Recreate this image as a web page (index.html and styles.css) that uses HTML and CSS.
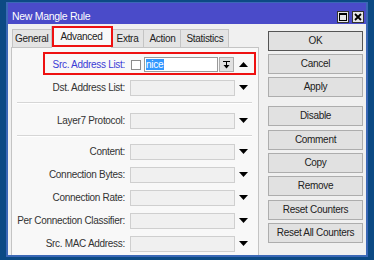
FILE: index.html
```html
<!DOCTYPE html>
<html lang="en">
<head>
    <meta charset="UTF-8">
    <title>New Mangle Rule</title>
    <link rel="stylesheet" href="styles.css">
</head>
<body>
    <!-- Window -->
    <div class="window">
        <div class="titlebar">
            <span class="title">New Mangle Rule</span>
            <span class="tb-btn tb-max">
                <svg width="8" height="8" viewBox="0 0 8 8"><rect x="0.5" y="0.5" width="7" height="7" fill="none" stroke="#000"/><line x1="0" y1="1.5" x2="8" y2="1.5" stroke="#000"/></svg>
            </span>
            <span class="tb-btn">
                <svg width="8" height="8" viewBox="0 0 8 8"><path d="M1 1 L7 7 M7 1 L1 7" stroke="#000" stroke-width="1.8"/></svg>
            </span>
        </div>

        <div class="client">
            <!-- Tabs + form -->
            <div class="left">
                <div class="tabs">
                    <div class="tab first">General</div>
                    <div class="tab active">Advanced</div>
                    <div class="tab">Extra</div>
                    <div class="tab">Action</div>
                    <div class="tab">Statistics</div>
                </div>
                <div class="panel">
                    <div class="row">
                        <label class="label active">Src. Address List:</label>
                        <div class="combo">
                            <span class="check"></span>
                            <span class="input"><span class="sel">nice</span></span>
                            <span class="mini-btn">
                                <svg width="7" height="8" viewBox="0 0 7 8"><line x1="0" y1="0.5" x2="7" y2="0.5" stroke="#000"/><rect x="3" y="1" width="1" height="4" fill="#000"/><path d="M0.5 4 L6.5 4 L3.5 7.5 Z" fill="#000"/></svg>
                            </span>
                        </div>
                        <span class="arrow"><svg width="9" height="5" viewBox="0 0 9 5"><path d="M0 5 L9 5 L4.5 0 Z" fill="#000"/></svg></span>
                    </div>
                    <div class="row">
                        <label class="label">Dst. Address List:</label>
                        <div class="field"></div>
                        <span class="arrow"><svg width="9" height="5" viewBox="0 0 9 5"><path d="M0 0 L9 0 L4.5 5 Z" fill="#000"/></svg></span>
                    </div>
                    <div class="sep"></div>
                    <div class="row">
                        <label class="label">Layer7 Protocol:</label>
                        <div class="field"></div>
                        <span class="arrow"><svg width="9" height="5" viewBox="0 0 9 5"><path d="M0 0 L9 0 L4.5 5 Z" fill="#000"/></svg></span>
                    </div>
                    <div class="sep sep-low"></div>
                    <div class="row">
                        <label class="label">Content:</label>
                        <div class="field"></div>
                        <span class="arrow"><svg width="9" height="5" viewBox="0 0 9 5"><path d="M0 0 L9 0 L4.5 5 Z" fill="#000"/></svg></span>
                    </div>
                    <div class="row">
                        <label class="label">Connection Bytes:</label>
                        <div class="field"></div>
                        <span class="arrow"><svg width="9" height="5" viewBox="0 0 9 5"><path d="M0 0 L9 0 L4.5 5 Z" fill="#000"/></svg></span>
                    </div>
                    <div class="row">
                        <label class="label">Connection Rate:</label>
                        <div class="field"></div>
                        <span class="arrow"><svg width="9" height="5" viewBox="0 0 9 5"><path d="M0 0 L9 0 L4.5 5 Z" fill="#000"/></svg></span>
                    </div>
                    <div class="row">
                        <label class="label">Per Connection Classifier:</label>
                        <div class="field"></div>
                        <span class="arrow"><svg width="9" height="5" viewBox="0 0 9 5"><path d="M0 0 L9 0 L4.5 5 Z" fill="#000"/></svg></span>
                    </div>
                    <div class="row">
                        <label class="label">Src. MAC Address:</label>
                        <div class="field"></div>
                        <span class="arrow"><svg width="9" height="5" viewBox="0 0 9 5"><path d="M0 0 L9 0 L4.5 5 Z" fill="#000"/></svg></span>
                    </div>
                </div>
            </div>

            <!-- Buttons -->
            <div class="buttons">
                <div class="btn default">OK</div>
                <div class="btn">Cancel</div>
                <div class="btn">Apply</div>
                <div class="btn spaced">Disable</div>
                <div class="btn">Comment</div>
                <div class="btn">Copy</div>
                <div class="btn">Remove</div>
                <div class="btn">Reset Counters</div>
                <div class="btn">Reset All Counters</div>
            </div>
        </div>

        <!-- Red highlight marks -->
        <div class="mark mark-tab"></div>
        <div class="mark mark-row"></div>
    </div>
</body>
</html>
```

FILE: styles.css
```css
/* Fond bureau */
body {
    margin: 0;
    padding: 0;
    background: #0c4a84;
    width: 374px;
    height: 260px;
    overflow: hidden;
    font-family: "Liberation Sans", Arial, sans-serif;
    font-size: 10px;
    letter-spacing: -0.3px;
    color: #222;
}

/* Fenetre */
.window {
    position: relative;
    margin: 2px 0 0 6px;
    width: 358px;
    border: 2px solid #3b68b6;
    border-top-width: 1px;
    background: #f0f0f0;
}

.titlebar {
    height: 21px;
    background: #4a4bc9;
    display: flex;
    align-items: center;
    padding: 0 2px 0 4px;
}

.title {
    color: #ffffff;
    font-size: 10.5px;
    padding-top: 5px;
}

.tb-btn {
    width: 10px;
    height: 10px;
    margin-top: 6px;
    border: 1px solid #333;
    background: #e6e6e6;
    display: flex;
    align-items: center;
    justify-content: center;
}

.tb-max {
    margin-left: auto;
    margin-right: 3px;
}

/* Zone client */
.client {
    display: flex;
    height: 231px;
    overflow: hidden;
}

.left {
    margin-left: 3px;
    width: 248px;
    padding-top: 3px;
}

.tabs {
    display: flex;
    align-items: flex-end;
    padding-left: 2px;
    height: 20px;
    position: relative;
    z-index: 1;
}

.tab {
    height: 17px;
    line-height: 17px;
    padding: 0 5px;
    background: #e4e4e4;
    border: 1px solid #c4c4c4;
    border-bottom: none;
    margin-left: -1px;
    color: #222;
}

.tab.first {
    padding: 0 3px 0 2px;
}

.tab.active {
    line-height: 20px;
    padding: 0 8px;
    margin: 0 0 -1px -1px;
    background: #f8f8f8;
    position: relative;
    z-index: 2;
    height: 21px;
}

.panel {
    border: 1px solid #c4c4c4;
    background: #f8f8f8;
    padding-top: 5px;
    height: 240px;
}

/* Lignes du formulaire */
.row {
    display: grid;
    grid-template-columns: 118px 105px 16px;
    align-items: center;
    height: 23px;
}

.label {
    text-align: right;
    padding-right: 5px;
    color: #333;
    white-space: nowrap;
}

.label.active {
    color: #3b3bd6;
}

.field {
    height: 14px;
    border: 1px solid #cfcfcf;
    background: #f0f0f0;
}

.combo {
    display: flex;
    align-items: center;
}

.check {
    width: 8px;
    height: 8px;
    margin-left: 1px;
    border: 1px solid #8c8c8c;
    background: #ffffff;
}

.input {
    margin-left: 3px;
    width: 71px;
    height: 13px;
    border: 1px solid #9a9a9a;
    background: #ffffff;
    display: flex;
    align-items: center;
    padding-left: 1px;
}

.sel {
    background: #3399ff;
    color: #ffffff;
    line-height: 11px;
    padding-right: 1px;
}

.mini-btn {
    width: 13px;
    height: 13px;
    margin-left: 1px;
    border: 1px solid #adadad;
    background: #e1e1e1;
    display: flex;
    align-items: center;
    justify-content: center;
}

.arrow {
    display: flex;
    justify-content: center;
    padding-left: 1px;
}

.sep {
    height: 1px;
    background: #d6d6d6;
    border-bottom: 1px solid #ffffff;
    margin: 3px 6px 5px 5px;
}

.sep-low {
    margin: 3px 6px 3px 5px;
}

/* Boutons */
.buttons {
    margin-left: 9px;
    width: 95px;
    padding-top: 6.5px;
    display: flex;
    flex-direction: column;
    gap: 3.3px;
}

.btn {
    height: 18px;
    line-height: 18px;
    text-align: center;
    border: 1px solid #adadad;
    background: #e1e1e1;
    color: #222;
    white-space: nowrap;
}

.btn.default {
    border-color: #555;
}

.btn.spaced {
    margin-top: 6px;
}

/* Cadres rouges */
.mark {
    position: absolute;
    z-index: 5;
    border: 2px solid #ee1111;
}

.mark-tab {
    left: 44px;
    top: 23px;
    width: 57px;
    height: 17px;
}

.mark-row {
    left: 35px;
    top: 49px;
    width: 209px;
    height: 19px;
}
```
